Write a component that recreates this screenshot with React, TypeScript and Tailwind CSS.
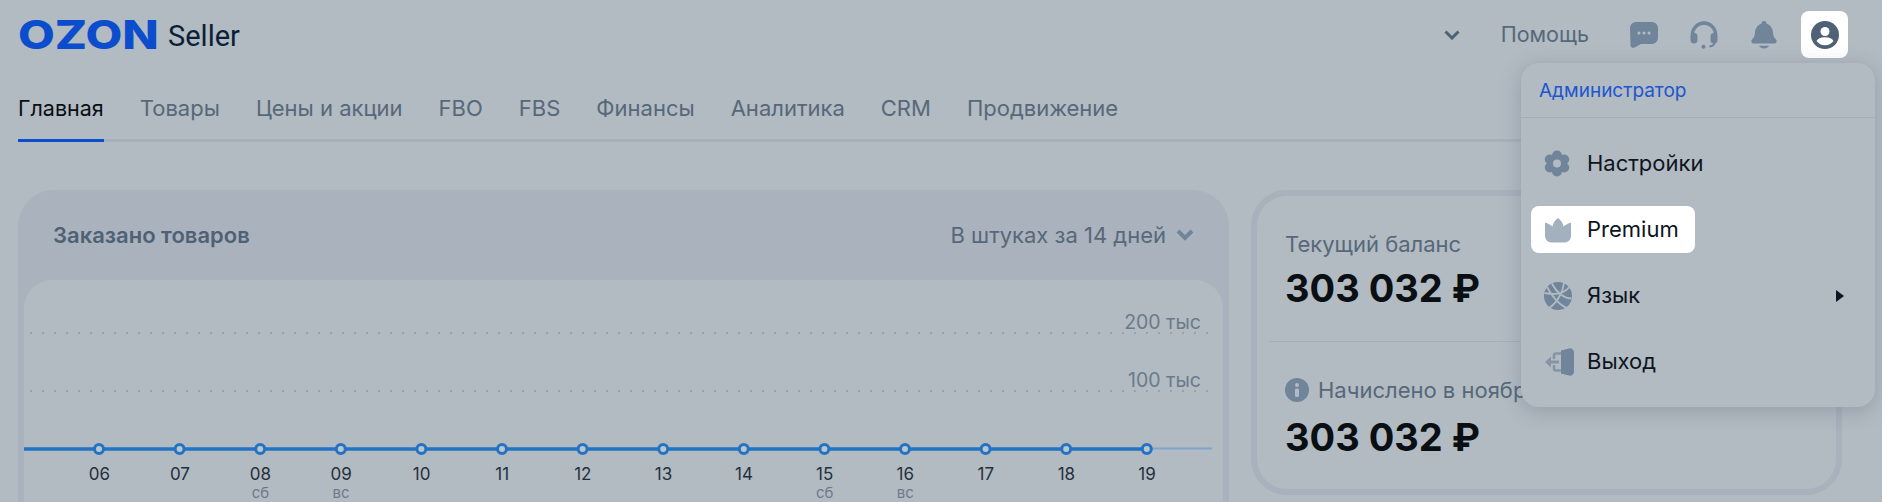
import React from 'react';

const tabs = ['Главная', 'Товары', 'Цены и акции', 'FBO', 'FBS', 'Финансы', 'Аналитика', 'CRM', 'Продвижение'];

const days = [
  { d: '06' }, { d: '07' }, { d: '08', s: 'сб' }, { d: '09', s: 'вс' }, { d: '10' }, { d: '11' }, { d: '12' },
  { d: '13' }, { d: '14' }, { d: '15', s: 'сб' }, { d: '16', s: 'вс' }, { d: '17' }, { d: '18' }, { d: '19' },
];

const ChatIcon = () => (
  <svg width="28" height="26" viewBox="0 0 28 26" fill="#71859a">
    <path d="M6 0h16a6 6 0 0 1 6 6v10a6 6 0 0 1-6 6H11l-6 3.300C2.800 26.500 1 25.500 0.500 23.500L0 6a6 6 0 0 1 6-6z" />
    <circle cx="9" cy="11" r="1.500" fill="#b2bac2" />
    <circle cx="14" cy="11" r="1.500" fill="#b2bac2" />
    <circle cx="19" cy="11" r="1.500" fill="#b2bac2" />
  </svg>
);

const HeadsetIcon = () => (
  <svg width="28" height="28" viewBox="0 0 28 28" fill="none">
    <path d="M2.500 16V13.500a11.500 11.500 0 0 1 23 0V16" stroke="#71859a" strokeWidth="3.500" />
    <rect x="0.500" y="12" width="7" height="10.500" rx="3.500" fill="#71859a" />
    <rect x="20.500" y="12" width="7" height="10.500" rx="3.500" fill="#71859a" />
    <path d="M24.500 21c0 2.500-2 4.300-5 4.300" stroke="#71859a" strokeWidth="2.200" />
    <circle cx="13.500" cy="25.800" r="2" fill="#71859a" />
  </svg>
);

const BellIcon = () => (
  <svg width="26" height="28" viewBox="0 0 26 28" fill="#71859a">
    <path d="M13 0a2.500 2.500 0 0 1 2.500 2.700C20 4 22 8 22 12c0 3 1.500 5 3 6.500 1.500 2 0 4-2 4H3c-2 0-3.500-2-2-4C2.500 17 4 15 4 12c0-4 2-8 6.500-9.300A2.500 2.500 0 0 1 13 0z" />
    <path d="M8 24.800h10c-1 1.700-3 2.700-5 2.700s-4-1-5-2.700z" />
  </svg>
);

const UserIcon = () => (
  <svg width="28" height="28" viewBox="0 0 28 28">
    <circle cx="14" cy="14" r="14" fill="#4f6175" />
    <circle cx="14" cy="10.500" r="4.500" fill="#ffffff" />
    <path d="M5.500 20c1-2.500 4-3.800 8.500-3.800s7.500 1.300 8.500 3.800c-2 2.800-5 4.300-8.500 4.300s-6.500-1.500-8.500-4.300z" fill="#ffffff" />
  </svg>
);

const GearIcon = () => (
  <svg width="26" height="27" viewBox="0 0 26 27">
    <g fill="#71859a">
      <circle cx="13" cy="13.500" r="9.500" />
      <circle cx="13" cy="5.500" r="5" />
      <circle cx="13" cy="21.500" r="5" />
      <circle cx="5.800" cy="9.500" r="5" />
      <circle cx="20.200" cy="9.500" r="5" />
      <circle cx="5.800" cy="17.500" r="5" />
      <circle cx="20.200" cy="17.500" r="5" />
    </g>
    <circle cx="13" cy="13.500" r="4" fill="#b2bac2" />
  </svg>
);

const CrownIcon = () => (
  <svg width="28" height="26" viewBox="0 0 28 26" fill="#a3b1bf">
    <path d="M14 1c3 2 5 5 5.500 8.500C21.500 8 24 6 27 5.500v13c0 4.500-3 7-7 7H8c-4 0-7-2.500-7-7v-13C4 6 6.500 8 8.500 9.500 9 6 11 3 14 1z" />
  </svg>
);

const GlobeIcon = () => (
  <svg width="28" height="28" viewBox="0 0 28 28">
    <circle cx="14" cy="14" r="14" fill="#71859a" />
    <path d="M3 5c4 8 12 18 20 21M20 1c-1 9-7 20-15 25M0.500 11c9 2 19 1 25-6M8 1.500c5 10 13 15 19.500 15" stroke="#b2bac2" strokeWidth="1.800" fill="none" />
  </svg>
);

const ExitIcon = () => (
  <svg width="31" height="28" viewBox="0 0 31 28" fill="none">
    <path d="M17 2.500l8-2a4 4 0 0 1 5 4v19a4 4 0 0 1-5 4l-8-2z" fill="#71859a" />
    <path d="M17 5.500H12a2 2 0 0 0-2 2V11M17 22.500H12a2 2 0 0 1-2-2V17" stroke="#8595a6" strokeWidth="2.500" />
    <path d="M1 14l6-5.500v4H15v3H7v4z" fill="#8595a6" />
  </svg>
);

const InfoIcon = () => (
  <svg width="24" height="24" viewBox="0 0 24 24">
    <circle cx="12" cy="12" r="12" fill="#71859a" />
    <circle cx="12" cy="7" r="2" fill="#b2bac2" />
    <rect x="10" y="10.500" width="4" height="8.500" rx="1.500" fill="#b2bac2" />
  </svg>
);

const Chart = () => {
  const step = 80.6;
  return (
    <svg width="1200" height="178" viewBox="0 0 1200 178" className="block">
      <line x1="6" y1="53" x2="1188" y2="53" stroke="#96a2ae" strokeWidth="2" strokeDasharray="2 10" />
      <line x1="6" y1="111" x2="1188" y2="111" stroke="#96a2ae" strokeWidth="2" strokeDasharray="2 10" />
      <line x1="1123" y1="168.500" x2="1188" y2="168.500" stroke="#7fa5cb" strokeWidth="2" />
      <line x1="0" y1="169" x2="1123" y2="169" stroke="#2273c4" strokeWidth="3.500" />
      {days.map((day, i) => (
        <circle key={day.d} cx={75 + step * i} cy="169" r="4.500" fill="#bcc4cc" stroke="#2273c4" strokeWidth="3" />
      ))}
    </svg>
  );
};

const MenuItem: React.FC<{ icon: React.ReactNode; label: string; active?: boolean; arrow?: boolean }> = ({ icon, label, active, arrow }) => (
  <div className={`flex h-[47px] items-center rounded-lg pl-[13px] pr-[21px] mb-[19px] ${active ? 'bg-white w-[164px]' : ''}`}>
    <div className="flex w-[43px] shrink-0 items-center">{icon}</div>
    <span className="text-[22px] text-[#0d1520]">{label}</span>
    {arrow && <span className="ml-auto h-0 w-0 border-y-[6px] border-l-[8px] border-y-transparent border-l-[#0d1520]" />}
  </div>
);

export default function App() {
  return (
    <div className="relative h-[502px] overflow-hidden bg-[#b2bac2] font-['Inter',sans-serif]">
      {/* шапка */}
      <header className="flex h-[70px] items-start justify-between pl-[18px] pr-[34px] pt-[11px]">
        <div className="flex h-[47px] items-center">
          <span className="w-[150px] shrink-0 origin-left scale-x-[1.19] text-[40px] font-extrabold leading-none text-[#0b4dcc]">OZON</span>
          <span className="mt-[4px] font-['Roboto',sans-serif] text-[29px] leading-none text-[#0c1f38]">Seller</span>
        </div>
        <div className="flex h-[47px] items-center">
          <svg width="16" height="10" viewBox="0 0 16 10" fill="none">
            <path d="M1.500 1.500L8 8l6.500-6.500" stroke="#4f6175" strokeWidth="3" />
          </svg>
          <span className="ml-[41px] text-[21.500px] text-[#566879]">Помощь</span>
          <div className="ml-[41px]"><ChatIcon /></div>
          <div className="ml-[32px]"><HeadsetIcon /></div>
          <div className="ml-[33px]"><BellIcon /></div>
          <div className="ml-[24px] flex h-[47px] w-[47px] items-center justify-center rounded-lg bg-white"><UserIcon /></div>
        </div>
      </header>

      {/* вкладки */}
      <nav className="mx-[18px] flex h-[72px] gap-[36px] border-b-[3px] border-[#a7b0ba]">
        {tabs.map((tab, i) => (
          <div key={tab} className={`-mb-[3px] flex h-[72px] items-center border-b-[3px] pt-[8px] ${i === 0 ? 'border-[#0b4dcc] text-[21.500px] text-[#0a0f14]' : 'border-transparent text-[22px] text-[#566879]'}`}>
            {tab}
          </div>
        ))}
      </nav>

      <main className="mt-[48px] flex gap-[22px] pl-[18px]">
        {/* заказано товаров */}
        <section className="h-[340px] w-[1211px] shrink-0 rounded-t-[36px] bg-[#aab2bd] px-[6px]">
          <div className="flex h-[90px] items-center justify-between pl-[29px] pr-[29px]">
            <h3 className="text-[22px] font-semibold text-[#4f6175]">Заказано товаров</h3>
            <div className="flex items-center gap-[10px] text-[22px] text-[#566879]">
              В штуках за 14 дней
              <svg width="18" height="12" viewBox="0 0 18 12" fill="none">
                <path d="M2 2l7 7 7-7" stroke="#71859a" strokeWidth="4" />
              </svg>
            </div>
          </div>
          <div className="relative h-[250px] rounded-t-[28px] bg-[#b2bac2]">
            <Chart />
            <span className="absolute right-[22px] top-[30px] text-[19.500px] leading-6 text-[#6a7a8a]">200 тыс</span>
            <span className="absolute right-[22px] top-[88px] text-[19.500px] leading-6 text-[#6a7a8a]">100 тыс</span>
            <div className="ml-[35px] flex">
              {days.map((day) => (
                <div key={day.d} className="w-[80.6px] shrink-0 text-center">
                  <div className="mt-[6px] text-[17px] leading-5 text-[#25303c]">{day.d}</div>
                  <div className="text-[15px] leading-[18px] text-[#6a7a8a]">{day.s}</div>
                </div>
              ))}
            </div>
          </div>
        </section>

        {/* баланс */}
        <section className="h-[305px] w-[591px] shrink-0 rounded-[36px] border-[6px] border-[#a8b1bc] px-[12px]">
          <div className="h-[146px] border-b border-[#a3aebb] pl-[16px] pt-[36px]">
            <div className="text-[22px] leading-6 text-[#566879]">Текущий баланс</div>
            <div className="mt-[8px] text-[38px] font-bold leading-[48px] text-[#0a0f14]">303 032 ₽</div>
          </div>
          <div className="pl-[16px] pt-[36px]">
            <div className="flex items-center gap-[9px] text-[22px] leading-6 text-[#566879]">
              <InfoIcon />
              Начислено в ноябре
            </div>
            <div className="mt-[11px] text-[38px] font-bold leading-[48px] text-[#0a0f14]">303 032 ₽</div>
          </div>
        </section>
      </main>

      {/* меню профиля */}
      <div className="absolute left-[1521px] top-[63px] h-[344px] w-[354px] rounded-[18px] bg-[#b2bac2] shadow-[0_4px_20px_rgba(60,75,95,0.25)]">
        <div className="flex h-[55px] items-center border-b border-[#a3aebb] pl-[18px] pt-[2px] text-[19px] text-[#1d56cf]">Администратор</div>
        <div className="pl-[10px] pt-[22px]">
          <div className="pr-[10px]"><MenuItem icon={<GearIcon />} label="Настройки" /></div>
          <MenuItem icon={<CrownIcon />} label="Premium" active />
          <div className="pr-[10px]"><MenuItem icon={<GlobeIcon />} label="Язык" arrow /></div>
          <div className="pr-[10px]"><MenuItem icon={<ExitIcon />} label="Выход" /></div>
        </div>
      </div>
    </div>
  );
}
